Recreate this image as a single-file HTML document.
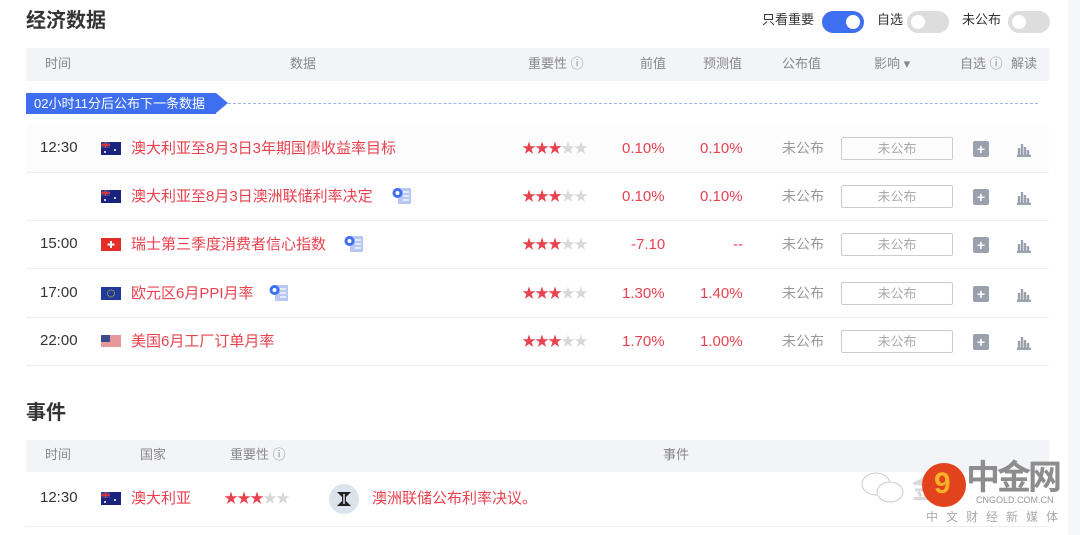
<!DOCTYPE html><html><head><meta charset="utf-8"><style>
*{margin:0;padding:0;box-sizing:border-box}
body{width:1080px;height:535px;background:#fff;position:relative;overflow:hidden;font-family:"Liberation Sans","Noto Sans CJK SC",sans-serif;color:#333}
.a{position:absolute;white-space:nowrap;line-height:1.2}
.h1{font-size:20px;font-weight:bold;color:#333}
.hd{position:absolute;left:26px;width:1023px;background:#f3f4f7;font-size:13px;color:#888}
.r{color:#e8424f}
.g{color:#999}
.sep{position:absolute;left:26px;width:1023px;height:1px;background:#eee}
.tg{position:absolute;width:42px;height:22px;border-radius:11px;background:#ddd}
.tg i{position:absolute;top:4px;width:14px;height:14px;border-radius:50%;background:#fff}
.st{font-size:14px;letter-spacing:-1px}
.st b{color:#e8424f;font-weight:normal}.st s{color:#d8d8d8;text-decoration:none}
.box{position:absolute;left:841px;width:112px;height:23px;border:1px solid #ccc;border-radius:2px;font-size:13px;color:#aaa;text-align:center;line-height:21px}
.pl{position:absolute;left:973px;width:16px;height:16px;background:#9aa0ad;border-radius:2px;color:#fff;font-size:14px;line-height:16px;text-align:center;font-weight:bold}
.flag{position:absolute;left:101px;width:20px;height:13px}
.vi{position:absolute;width:20px;height:18px}
</style></head><body>
<div class="a h1" style="left:26px;top:9px">经济数据</div>
<div class="a" style="left:762px;top:12px;font-size:13px">只看重要</div>
<div class="tg" style="left:822px;top:11px;background:#3d6ff0"><i style="left:24px"></i></div>
<div class="a" style="left:877px;top:12px;font-size:13px">自选</div>
<div class="tg" style="left:907px;top:11px"><i style="left:4px"></i></div>
<div class="a" style="left:962px;top:12px;font-size:13px">未公布</div>
<div class="tg" style="left:1008px;top:11px"><i style="left:4px"></i></div>
<div style="position:absolute;left:1068px;top:0;width:12px;height:535px;background:#f5f6f8"></div>

<div class="hd" style="top:48px;height:33px">
<span class="a" style="left:19px;top:8px">时间</span><span class="a" style="left:264px;top:8px">数据</span>
<span class="a" style="left:502px;top:8px">重要性 ⓘ</span><span class="a" style="left:614px;top:8px">前值</span>
<span class="a" style="left:677px;top:8px">预测值</span><span class="a" style="left:756px;top:8px">公布值</span>
<span class="a" style="left:848px;top:8px">影响 ▾</span><span class="a" style="left:934px;top:8px">自选 ⓘ</span><span class="a" style="left:985px;top:8px">解读</span></div>

<div class="a" style="left:26px;top:93px;height:21px;width:190px;background:#3d6ff0;color:#fff;font-size:13px;line-height:21px;padding-left:8px">02小时11分后公布下一条数据</div>
<div class="a" style="left:216px;top:93px;width:0;height:0;border-top:10.5px solid transparent;border-bottom:10.5px solid transparent;border-left:12px solid #3d6ff0"></div>
<div class="a" style="left:228px;top:103px;width:810px;border-top:1px dashed #9fb4ee"></div>

<div class="a" style="left:26px;top:124px;width:1023px;height:48px;background:#fcfcfd"></div>
<div class="a" style="left:40px;top:139px;font-size:15px">12:30</div>
<div class="a" style="left:40px;top:235px;font-size:15px">15:00</div>
<div class="a" style="left:40px;top:284px;font-size:15px">17:00</div>
<div class="a" style="left:40px;top:332px;font-size:15px">22:00</div>

<svg class="flag" style="top:142px" viewBox="0 0 20 13"><rect width="20" height="13" fill="#1a237e"/><rect width="9" height="6" fill="#34418f"/><path d="M0 3h9M4.5 0v6" stroke="#e33" stroke-width="1.5"/><circle cx="14" cy="8" r="1" fill="#fff"/><circle cx="4" cy="10" r="1" fill="#fff"/></svg>
<svg class="flag" style="top:190px" viewBox="0 0 20 13"><rect width="20" height="13" fill="#1a237e"/><rect width="9" height="6" fill="#34418f"/><path d="M0 3h9M4.5 0v6" stroke="#e33" stroke-width="1.5"/><circle cx="14" cy="8" r="1" fill="#fff"/><circle cx="4" cy="10" r="1" fill="#fff"/></svg>
<svg class="flag" style="top:238px" viewBox="0 0 20 13"><rect width="20" height="13" fill="#e52d27"/><path d="M10 3v7M6.5 6.5h7" stroke="#fff" stroke-width="2"/></svg>
<svg class="flag" style="top:287px" viewBox="0 0 20 13"><rect width="20" height="13" fill="#1e3a9a"/><circle cx="10" cy="6.5" r="3.5" fill="none" stroke="#fc0" stroke-width="1" stroke-dasharray="1 1"/></svg>
<svg class="flag" style="top:335px" viewBox="0 0 20 13"><rect width="20" height="13" fill="#fff"/><path d="M0 1h20M0 3h20M0 5h20M0 7h20M0 9h20M0 11h20" stroke="#c33" stroke-width="1"/><rect width="9" height="7" fill="#3a4a8a"/></svg>

<div class="a r" style="left:131px;top:140px;font-size:15px">澳大利亚至8月3日3年期国债收益率目标</div>
<div class="a r" style="left:131px;top:188px;font-size:15px">澳大利亚至8月3日澳洲联储利率决定</div>
<div class="a r" style="left:131px;top:236px;font-size:15px">瑞士第三季度消费者信心指数</div>
<div class="a r" style="left:131px;top:285px;font-size:15px">欧元区6月PPI月率</div>
<div class="a r" style="left:131px;top:333px;font-size:15px">美国6月工厂订单月率</div>

<svg class="vi" style="left:392px;top:187px" viewBox="0 0 20 18"><rect x="6" y="1" width="13" height="16" fill="#b8c8f5"/><path d="M11 5h6M11 9h6M11 13h6" stroke="#fff" stroke-width="1.2"/><circle cx="5.5" cy="6" r="5" fill="#3d6ff0"/><circle cx="5.5" cy="6" r="2" fill="#fff"/></svg>
<svg class="vi" style="left:344px;top:235px" viewBox="0 0 20 18"><rect x="6" y="1" width="13" height="16" fill="#b8c8f5"/><path d="M11 5h6M11 9h6M11 13h6" stroke="#fff" stroke-width="1.2"/><circle cx="5.5" cy="6" r="5" fill="#3d6ff0"/><circle cx="5.5" cy="6" r="2" fill="#fff"/></svg>
<svg class="vi" style="left:269px;top:284px" viewBox="0 0 20 18"><rect x="6" y="1" width="13" height="16" fill="#b8c8f5"/><path d="M11 5h6M11 9h6M11 13h6" stroke="#fff" stroke-width="1.2"/><circle cx="5.5" cy="6" r="5" fill="#3d6ff0"/><circle cx="5.5" cy="6" r="2" fill="#fff"/></svg>

<div class="a st" style="left:522px;top:140px"><b>★★★</b><s>★★</s></div>
<div class="a st" style="left:522px;top:188px"><b>★★★</b><s>★★</s></div>
<div class="a st" style="left:522px;top:236px"><b>★★★</b><s>★★</s></div>
<div class="a st" style="left:522px;top:285px"><b>★★★</b><s>★★</s></div>
<div class="a st" style="left:522px;top:333px"><b>★★★</b><s>★★</s></div>

<div class="a r" style="left:622px;top:140px;font-size:15px">0.10%</div><div class="a r" style="left:700px;top:140px;font-size:15px">0.10%</div>
<div class="a r" style="left:622px;top:188px;font-size:15px">0.10%</div><div class="a r" style="left:700px;top:188px;font-size:15px">0.10%</div>
<div class="a r" style="left:631px;top:236px;font-size:15px">-7.10</div><div class="a r" style="left:733px;top:236px;font-size:15px">--</div>
<div class="a r" style="left:622px;top:285px;font-size:15px">1.30%</div><div class="a r" style="left:700px;top:285px;font-size:15px">1.40%</div>
<div class="a r" style="left:622px;top:333px;font-size:15px">1.70%</div><div class="a r" style="left:700px;top:333px;font-size:15px">1.00%</div>

<div class="a g" style="left:782px;top:140px;font-size:14px">未公布</div>
<div class="a g" style="left:782px;top:188px;font-size:14px">未公布</div>
<div class="a g" style="left:782px;top:236px;font-size:14px">未公布</div>
<div class="a g" style="left:782px;top:285px;font-size:14px">未公布</div>
<div class="a g" style="left:782px;top:333px;font-size:14px">未公布</div>
<div class="box" style="top:137px">未公布</div><div class="box" style="top:185px">未公布</div><div class="box" style="top:233px">未公布</div><div class="box" style="top:282px">未公布</div><div class="box" style="top:330px">未公布</div>
<div class="pl" style="top:141px">+</div><div class="pl" style="top:189px">+</div><div class="pl" style="top:237px">+</div><div class="pl" style="top:286px">+</div><div class="pl" style="top:334px">+</div>
<svg class="a" style="left:1016px;top:141px" width="16" height="16" viewBox="0 0 16 16"><path d="M1 15h14M3 15V7M6 15V3M9 15V6M12 15V9" stroke="#9aa0ad" stroke-width="2.4"/></svg>
<svg class="a" style="left:1016px;top:189px" width="16" height="16" viewBox="0 0 16 16"><path d="M1 15h14M3 15V7M6 15V3M9 15V6M12 15V9" stroke="#9aa0ad" stroke-width="2.4"/></svg>
<svg class="a" style="left:1016px;top:237px" width="16" height="16" viewBox="0 0 16 16"><path d="M1 15h14M3 15V7M6 15V3M9 15V6M12 15V9" stroke="#9aa0ad" stroke-width="2.4"/></svg>
<svg class="a" style="left:1016px;top:286px" width="16" height="16" viewBox="0 0 16 16"><path d="M1 15h14M3 15V7M6 15V3M9 15V6M12 15V9" stroke="#9aa0ad" stroke-width="2.4"/></svg>
<svg class="a" style="left:1016px;top:334px" width="16" height="16" viewBox="0 0 16 16"><path d="M1 15h14M3 15V7M6 15V3M9 15V6M12 15V9" stroke="#9aa0ad" stroke-width="2.4"/></svg>

<div class="sep" style="top:172px"></div><div class="sep" style="top:220px"></div><div class="sep" style="top:268px"></div><div class="sep" style="top:317px"></div><div class="sep" style="top:365px"></div>

<div class="a h1" style="left:26px;top:401px">事件</div>
<div class="hd" style="top:440px;height:32px">
<span class="a" style="left:19px;top:7px">时间</span><span class="a" style="left:114px;top:7px">国家</span><span class="a" style="left:204px;top:7px">重要性 ⓘ</span><span class="a" style="left:637px;top:7px">事件</span></div>
<div class="a" style="left:40px;top:489px;font-size:15px">12:30</div>
<svg class="flag" style="top:492px" viewBox="0 0 20 13"><rect width="20" height="13" fill="#1a237e"/><rect width="9" height="6" fill="#34418f"/><path d="M0 3h9M4.5 0v6" stroke="#e33" stroke-width="1.5"/><circle cx="14" cy="8" r="1" fill="#fff"/><circle cx="4" cy="10" r="1" fill="#fff"/></svg>
<div class="a r" style="left:131px;top:490px;font-size:15px">澳大利亚</div>
<div class="a st" style="left:224px;top:490px"><b>★★★</b><s>★★</s></div>
<svg class="a" style="left:329px;top:484px" width="30" height="30" viewBox="0 0 30 30"><circle cx="15" cy="15" r="15" fill="#dde3ec"/><path d="M8 8h14l-5 5v4l5 5H8l5-5v-4z" fill="#222"/><path d="M15 10v10" stroke="#dde3ec" stroke-width="1.5"/></svg>
<div class="a r" style="left:372px;top:490px;font-size:15px">澳洲联储公布利率决议。</div>
<div class="sep" style="top:526px"></div>

<svg class="a" style="left:860px;top:470px" width="50" height="38" viewBox="0 0 50 38"><ellipse cx="16" cy="14" rx="14" ry="11" fill="#fff" stroke="#ccc"/><ellipse cx="30" cy="22" rx="13" ry="10" fill="#fff" stroke="#ccc"/></svg>
<div class="a" style="left:912px;top:472px;font-size:28px;color:#d8d8d8;font-weight:bold">金</div>
<div class="a" style="left:922px;top:463px;width:44px;height:44px;border-radius:50%;background:#e2421c"></div>
<div class="a" style="left:934px;top:466px;font-size:30px;color:#f6b02a;font-weight:bold">9</div>
<div class="a" style="left:966px;top:458px;font-size:34px;color:#8d8d8d;font-weight:bold;letter-spacing:-3px">中金网</div>
<div class="a" style="left:976px;top:495px;font-size:9px;color:#999">CNGOLD.COM.CN</div>
<div class="a" style="left:926px;top:510px;font-size:12px;color:#aaa;letter-spacing:8px">中文财经新媒体</div>
</body></html>
